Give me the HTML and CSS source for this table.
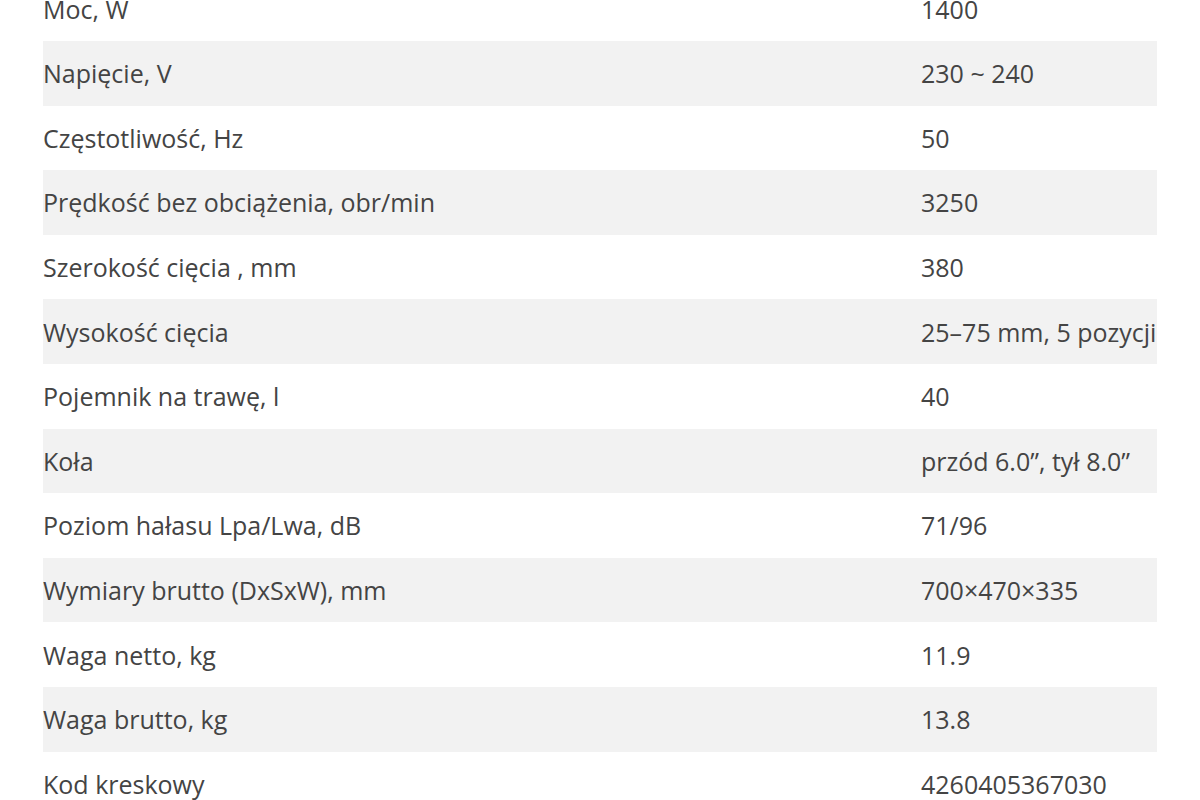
FILE: index.html
```html
<!DOCTYPE html>
<html lang="pl">
<head>
<meta charset="utf-8">
<title>Specyfikacja</title>
<link rel="stylesheet" href="styles.css">
</head>
<body>
<div class="page">
  <div class="specs">
    <div class="row"><div class="name">Moc, W</div><div class="val">1400</div></div>
    <div class="row"><div class="name">Napięcie, V</div><div class="val">230 ~ 240</div></div>
    <div class="row"><div class="name">Częstotliwość, Hz</div><div class="val">50</div></div>
    <div class="row"><div class="name">Prędkość bez obciążenia, obr/min</div><div class="val">3250</div></div>
    <div class="row"><div class="name">Szerokość cięcia , mm</div><div class="val">380</div></div>
    <div class="row"><div class="name">Wysokość cięcia</div><div class="val">25–75 mm, 5 pozycji</div></div>
    <div class="row"><div class="name">Pojemnik na trawę, l</div><div class="val">40</div></div>
    <div class="row"><div class="name">Koła</div><div class="val">przód 6.0”, tył 8.0”</div></div>
    <div class="row"><div class="name">Poziom hałasu Lpa/Lwa, dB</div><div class="val">71/96</div></div>
    <div class="row"><div class="name">Wymiary brutto (DxSxW), mm</div><div class="val">700×470×335</div></div>
    <div class="row"><div class="name">Waga netto, kg</div><div class="val">11.9</div></div>
    <div class="row"><div class="name">Waga brutto, kg</div><div class="val">13.8</div></div>
    <div class="row"><div class="name">Kod kreskowy</div><div class="val">4260405367030</div></div>
  </div>
</div>
</body>
</html>
```
FILE: styles.css
```css
html, body {
  margin: 0;
  padding: 0;
  background: #ffffff;
  overflow: hidden;
}
.page {
  width: 1200px;
  height: 800px;
  overflow: hidden;
  padding-left: 43px;
  box-sizing: border-box;
}
.specs {
  width: 1114px;
  margin-top: -23.6px;
  display: grid;
  grid-auto-rows: 64.6px;
  font-family: "Open Sans", "Liberation Sans", sans-serif;
  font-size: 25px;
  color: #444444;
}
.row {
  display: grid;
  grid-template-columns: 878px 1fr;
  align-items: center;
  overflow: hidden;
}
.row:nth-child(even) {
  background: #f2f2f2;
}
.name, .val {
  white-space: nowrap;
  line-height: 1.2;
}
```
